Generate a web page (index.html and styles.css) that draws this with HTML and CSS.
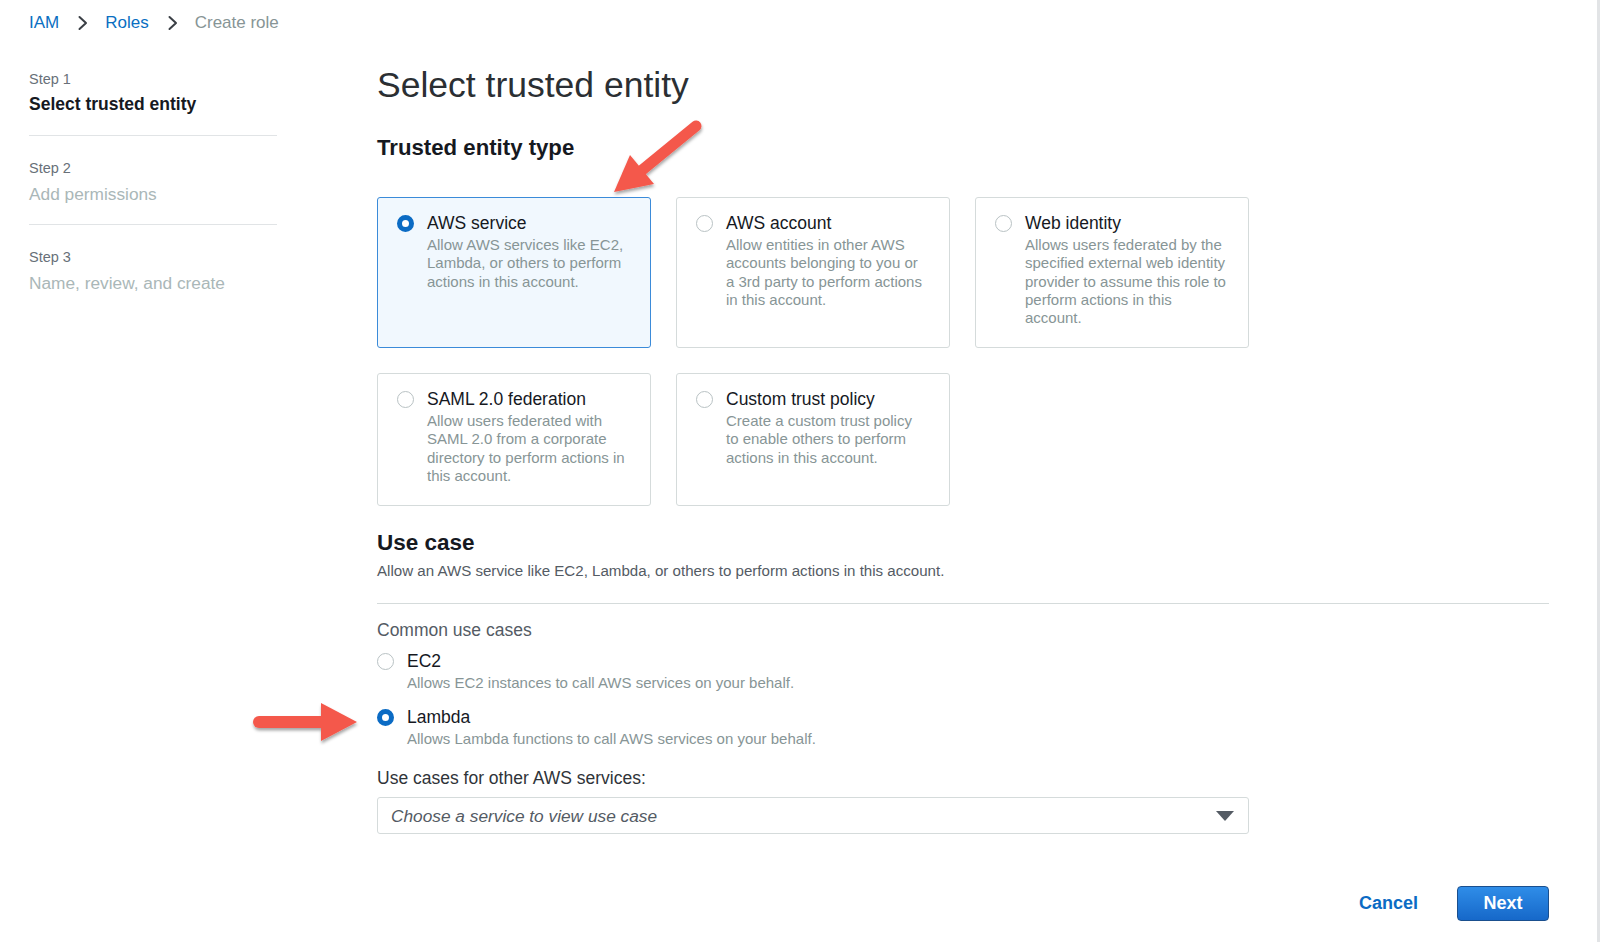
FILE: index.html
```html
<!DOCTYPE html>
<html lang="en">
<head>
<meta charset="utf-8">
<title>Create role - IAM</title>
<link rel="stylesheet" href="styles.css">
</head>
<body>
<div class="page">
  <nav class="crumbs">
    <a class="crumb-link">IAM</a>
    <svg class="chev" width="11" height="16" viewBox="0 0 11 16"><path d="M2.5 2 L9 8 L2.5 14" fill="none" stroke="#3a3f45" stroke-width="2" stroke-linecap="round" stroke-linejoin="round"/></svg>
    <a class="crumb-link">Roles</a>
    <svg class="chev" width="11" height="16" viewBox="0 0 11 16"><path d="M2.5 2 L9 8 L2.5 14" fill="none" stroke="#3a3f45" stroke-width="2" stroke-linecap="round" stroke-linejoin="round"/></svg>
    <span class="crumb-current">Create role</span>
  </nav>

  <div class="layout">
    <aside class="steps">
      <div class="step">
        <div class="step-num">Step 1</div>
        <div class="step-name active">Select trusted entity</div>
      </div>
      <div class="step">
        <div class="step-num">Step 2</div>
        <div class="step-name">Add permissions</div>
      </div>
      <div class="step last">
        <div class="step-num">Step 3</div>
        <div class="step-name">Name, review, and create</div>
      </div>
    </aside>

    <main class="content">
      <h1 class="page-title">Select trusted entity</h1>
      <h2 class="section-title">Trusted entity type</h2>

      <div class="tiles">
        <div class="tile selected">
          <span class="radio on"></span>
          <div class="tile-body">
            <div class="tile-title">AWS service</div>
            <div class="tile-desc">Allow AWS services like EC2,<br>Lambda, or others to perform<br>actions in this account.</div>
          </div>
        </div>
        <div class="tile">
          <span class="radio"></span>
          <div class="tile-body">
            <div class="tile-title">AWS account</div>
            <div class="tile-desc">Allow entities in other AWS<br>accounts belonging to you or<br>a 3rd party to perform actions<br>in this account.</div>
          </div>
        </div>
        <div class="tile">
          <span class="radio"></span>
          <div class="tile-body">
            <div class="tile-title">Web identity</div>
            <div class="tile-desc">Allows users federated by the<br>specified external web identity<br>provider to assume this role to<br>perform actions in this<br>account.</div>
          </div>
        </div>
        <div class="tile">
          <span class="radio"></span>
          <div class="tile-body">
            <div class="tile-title">SAML 2.0 federation</div>
            <div class="tile-desc">Allow users federated with<br>SAML 2.0 from a corporate<br>directory to perform actions in<br>this account.</div>
          </div>
        </div>
        <div class="tile">
          <span class="radio"></span>
          <div class="tile-body">
            <div class="tile-title">Custom trust policy</div>
            <div class="tile-desc">Create a custom trust policy<br>to enable others to perform<br>actions in this account.</div>
          </div>
        </div>
      </div>

      <h2 class="section-title usecase-title">Use case</h2>
      <p class="section-desc">Allow an AWS service like EC2, Lambda, or others to perform actions in this account.</p>
      <div class="divider"></div>

      <div class="field-label common">Common use cases</div>
      <div class="option">
        <span class="radio"></span>
        <div>
          <div class="option-title">EC2</div>
          <div class="option-desc">Allows EC2 instances to call AWS services on your behalf.</div>
        </div>
      </div>
      <div class="option second">
        <span class="radio on"></span>
        <div>
          <div class="option-title">Lambda</div>
          <div class="option-desc">Allows Lambda functions to call AWS services on your behalf.</div>
        </div>
      </div>

      <div class="field-label other">Use cases for other AWS services:</div>
      <div class="select">
        <span class="select-text">Choose a service to view use case</span>
        <span class="caret"></span>
      </div>

      <div class="actions">
        <a class="btn-link">Cancel</a>
        <button class="btn-primary" type="button">Next</button>
      </div>
    </main>
  </div>

  <svg class="annotations" width="1600" height="942" viewBox="0 0 1600 942">
    <defs>
      <filter id="shadow" x="-20%" y="-20%" width="140%" height="140%">
        <feDropShadow dx="0.5" dy="2.5" stdDeviation="1.8" flood-color="#000" flood-opacity="0.35"/>
      </filter>
    </defs>
    <g filter="url(#shadow)" fill="#f4584b" stroke="none">
      <line x1="696" y1="126" x2="641" y2="171" stroke="#f4584b" stroke-width="11" stroke-linecap="round"/>
      <polygon points="614,192 654,184 630,155"/>
      <line x1="259" y1="722" x2="326" y2="722" stroke="#f4584b" stroke-width="12" stroke-linecap="round"/>
      <polygon points="357,722 321,703 321,741"/>
    </g>
  </svg>
</div>
</body>
</html>
```

FILE: styles.css
```css
* {
  box-sizing: border-box;
}

html, body {
  margin: 0;
  padding: 0;
  background: #ffffff;
}

body {
  font-family: "Liberation Sans", Arial, Helvetica, sans-serif;
  color: #16191f;
}

.page {
  position: relative;
  width: 1600px;
  min-height: 942px;
  padding: 13px 0 0 29px;
  border-right: 3px solid #e2e4e6;
  overflow: hidden;
}

/* Breadcrumbs */
.crumbs {
  display: flex;
  align-items: center;
  height: 20px;
  font-size: 17px;
  line-height: 20px;
}

.crumb-link {
  color: #0a6fc2;
  text-decoration: none;
}

.chev {
  display: block;
  margin: 0 17px 0 18px;
}

.crumb-current {
  color: #879596;
}

/* Layout */
.layout {
  display: flex;
  gap: 100px;
  margin-top: 32px;
}

.steps {
  width: 248px;
  flex: none;
  padding-top: 5px;
}

.step {
  padding: 23px 0 19.5px;
  border-bottom: 1px solid #e1e4e6;
}

.step:first-child {
  padding-top: 0;
  padding-bottom: 20.5px;
}

.step.last {
  border-bottom: none;
}

.step-num {
  font-size: 14.5px;
  line-height: 18px;
  color: #687078;
}

.step-name {
  margin-top: 5.5px;
  font-size: 17.3px;
  line-height: 22px;
  color: #aab7b8;
}

.step-name.active {
  margin-top: 4.5px;
  font-size: 17.5px;
  font-weight: bold;
  color: #16191f;
}

.content {
  width: 1172px;
  flex: none;
}

.page-title {
  margin: 0;
  font-size: 35.5px;
  line-height: 40px;
  font-weight: normal;
  color: #2b2f33;
}

.section-title {
  margin: 29.4px 0 0;
  font-size: 22.2px;
  line-height: 28px;
  font-weight: bold;
  color: #16191f;
}

/* Tiles */
.tiles {
  display: grid;
  grid-template-columns: repeat(3, 274px);
  gap: 25px;
  margin-top: 34.6px;
  width: 872px;
}

.tile {
  display: flex;
  gap: 13px;
  align-items: flex-start;
  padding: 14.3px 19px 19.4px;
  border: 1px solid #d5dbdb;
  border-radius: 3px;
  background: #ffffff;
}

.tile.selected {
  border-color: #3b8bd9;
  background: #f1f8fe;
}

.radio {
  display: block;
  flex: none;
  width: 17px;
  height: 17px;
  margin-top: 2.5px;
  border-radius: 50%;
  border: 1px solid #b9c2c4;
  background: #ffffff;
}

.radio.on {
  border: 5px solid #0b6bc4;
}

.tile-title {
  font-size: 17.5px;
  line-height: 22px;
  color: #16191f;
}

.tile-desc {
  margin-top: 1.8px;
  font-size: 15px;
  line-height: 18.3px;
  color: #879596;
  white-space: nowrap;
}

/* Use case */
.section-title.usecase-title {
  margin-top: 23.5px;
  font-size: 22.5px;
}

.section-desc {
  margin: 3.4px 0 0;
  font-size: 15.1px;
  line-height: 20px;
  color: #545b64;
}

.divider {
  margin-top: 22.4px;
  height: 1px;
  background: #d5dbdb;
}

.field-label {
  font-size: 17.5px;
  line-height: 22px;
  color: #3d4248;
}

.field-label.common {
  margin-top: 14.6px;
  color: #545b64;
}

.field-label.other {
  margin-top: 18.8px;
  color: #2f3439;
}

.option {
  display: flex;
  gap: 13px;
  align-items: flex-start;
  margin-top: 9.6px;
}

.option.second {
  margin-top: 13.6px;
}

.option-title {
  font-size: 17.5px;
  line-height: 22px;
  color: #16191f;
}

.option-desc {
  margin-top: 0.5px;
  font-size: 15px;
  line-height: 20px;
  color: #879596;
}

.select {
  display: flex;
  align-items: center;
  justify-content: space-between;
  width: 872px;
  height: 37px;
  margin-top: 7.2px;
  padding: 2px 14px 0 13px;
  border: 1px solid #d5dbdb;
  border-radius: 3px;
  background: #ffffff;
}

.select-text {
  font-size: 17.3px;
  font-style: italic;
  color: #545b64;
}

.caret {
  display: block;
  width: 0;
  height: 0;
  border-left: 9px solid transparent;
  border-right: 9px solid transparent;
  border-top: 10px solid #545b64;
}

/* Actions */
.actions {
  display: flex;
  justify-content: flex-end;
  align-items: center;
  gap: 39px;
  margin-top: 52px;
}

.btn-link {
  font-size: 18px;
  font-weight: bold;
  color: #0b6bc4;
  text-decoration: none;
}

.btn-primary {
  width: 92px;
  height: 35.5px;
  padding: 0;
  border: 1px solid #1a4f8e;
  border-radius: 4px;
  background: linear-gradient(#2f8de8, #1668c9);
  color: #ffffff;
  font-family: "Liberation Sans", Arial, Helvetica, sans-serif;
  font-size: 18px;
  font-weight: bold;
}

/* Annotation overlay */
.annotations {
  position: absolute;
  top: 0;
  left: 0;
  pointer-events: none;
}
```
